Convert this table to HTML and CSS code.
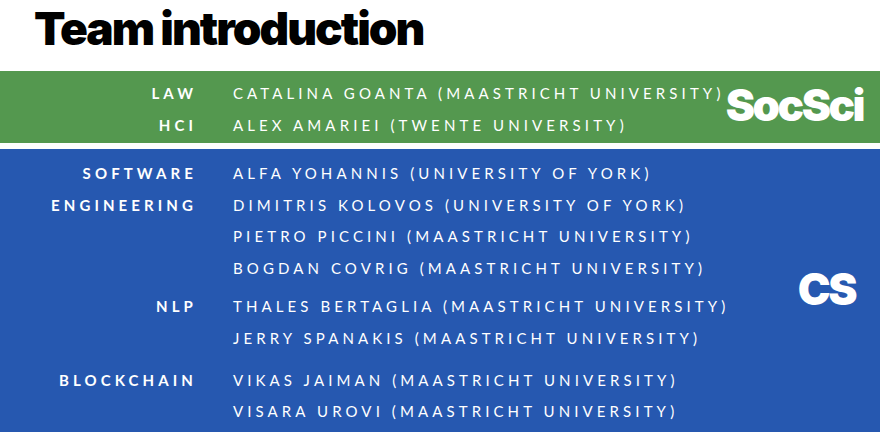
FILE: index.html
```html
<!DOCTYPE html>
<html lang="en">
<head>
<meta charset="utf-8">
<title>Team introduction</title>
<link rel="stylesheet" href="styles.css">
</head>
<body>
<h1 class="title">Team introduction</h1>

<section class="band band--green">
  <div class="groups">
    <div class="group group--green">
      <div class="label">LAW</div>
      <div class="names"><div>CATALINA GOANTA (MAASTRICHT UNIVERSITY)</div></div>
      <div class="label">HCI</div>
      <div class="names"><div>ALEX AMARIEI (TWENTE UNIVERSITY)</div></div>
    </div>
  </div>
  <div class="logo logo--socsci">SocSci</div>
</section>

<section class="band band--blue">
  <div class="groups">
    <div class="group">
      <div class="label">SOFTWARE<br>ENGINEERING</div>
      <div class="names">
        <div>ALFA YOHANNIS (UNIVERSITY OF YORK)</div>
        <div>DIMITRIS KOLOVOS (UNIVERSITY OF YORK)</div>
        <div>PIETRO PICCINI (MAASTRICHT UNIVERSITY)</div>
        <div>BOGDAN COVRIG (MAASTRICHT UNIVERSITY)</div>
      </div>
    </div>
    <div class="group group--nlp">
      <div class="label">NLP</div>
      <div class="names">
        <div>THALES BERTAGLIA (MAASTRICHT UNIVERSITY)</div>
        <div>JERRY SPANAKIS (MAASTRICHT UNIVERSITY)</div>
      </div>
    </div>
    <div class="group group--chain">
      <div class="label">BLOCKCHAIN</div>
      <div class="names">
        <div>VIKAS JAIMAN (MAASTRICHT UNIVERSITY)</div>
        <div>VISARA UROVI (MAASTRICHT UNIVERSITY)</div>
      </div>
    </div>
  </div>
  <div class="logo logo--cs">CS</div>
</section>
</body>
</html>
```

FILE: styles.css
```css
* { box-sizing: border-box; }

html, body {
  margin: 0;
  padding: 0;
  background: #ffffff;
  width: 880px;
  height: 432px;
  overflow: hidden;
}

body {
  font-family: "Lato", "Liberation Sans", sans-serif;
}

.title {
  margin: 0;
  height: 71px;
  padding: 0 0 0 34px;
  font-family: "Inter", "Lato", sans-serif;
  font-weight: 900;
  font-size: 46px;
  line-height: 56px;
  letter-spacing: -2px;
  color: #000;
  white-space: nowrap;
}

.band {
  display: flex;
  align-items: flex-start;
  color: #ffffff;
}

.band--green {
  background: #54984f;
  height: 72px;
  margin-bottom: 6px;
  padding-top: 6px;
}

.band--blue {
  background: #2658b0;
  height: 283px;
  padding-top: 9px;
}

.groups {
  flex: 1;
  min-width: 0;
}

.group {
  display: grid;
  grid-template-columns: 197px auto;
  column-gap: 36px;
  font-size: 15px;
  line-height: 31.6px;
  letter-spacing: 4.1px;
  white-space: nowrap;
}

.group--green { line-height: 32px; }
.group--nlp { margin-top: 7px; }
.group--chain { margin-top: 10px; }

.label {
  text-align: right;
  font-weight: 700;
}

.names {
  font-weight: 400;
}

.logo {
  font-family: "Inter", "Lato", sans-serif;
  font-weight: 900;
  font-size: 44px;
  letter-spacing: -2.5px;
  line-height: 1;
  white-space: nowrap;
}

.logo--socsci {
  align-self: center;
  margin-right: 17px;
  margin-top: -10px;
}

.logo--cs {
  margin-right: 25px;
  margin-top: 109px;
}
```
